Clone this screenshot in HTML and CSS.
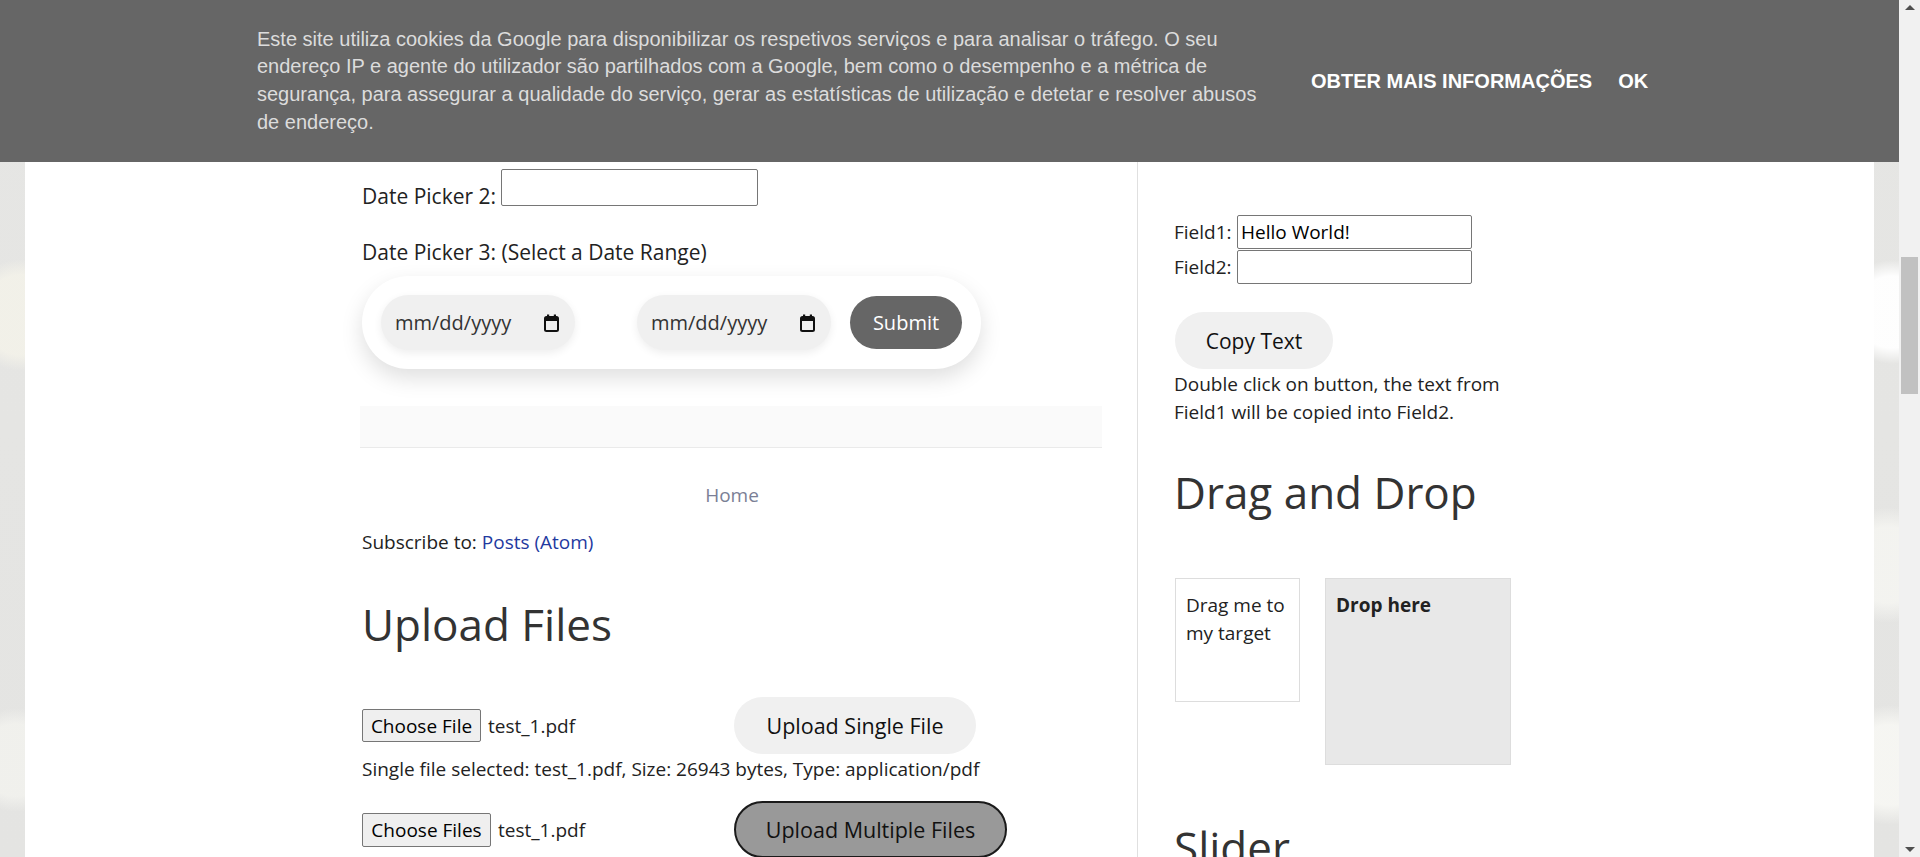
FILE: index.html
```html
<!DOCTYPE html>
<html lang="pt">
<head>
<meta charset="utf-8">
<title>Automation Testing Practice</title>
<link rel="stylesheet" href="styles.css">
</head>
<body>
<div class="screen">
  <div class="viewport">
    <div class="page">
      <main class="main">
        <div class="dp2">
          <label class="dp2-label">Date Picker 2:</label>
          <input class="text-input" type="text">
        </div>
        <p class="dp3-label">Date Picker 3: (Select a Date Range)</p>
        <div class="range-pill">
          <div class="date-field">
            <span class="date-text">mm/dd/yyyy</span>
            <svg class="cal" width="15" height="18" viewBox="0 0 15 18"><rect x="1" y="3" width="13" height="14" rx="1.5" fill="none" stroke="#111" stroke-width="2"/><rect x="1" y="3" width="13" height="4" fill="#111"/><rect x="3" y="0.5" width="2.2" height="3" fill="#111"/><rect x="9.8" y="0.5" width="2.2" height="3" fill="#111"/></svg>
          </div>
          <div class="date-field gap">
            <span class="date-text">mm/dd/yyyy</span>
            <svg class="cal" width="15" height="18" viewBox="0 0 15 18"><rect x="1" y="3" width="13" height="14" rx="1.5" fill="none" stroke="#111" stroke-width="2"/><rect x="1" y="3" width="13" height="4" fill="#111"/><rect x="3" y="0.5" width="2.2" height="3" fill="#111"/><rect x="9.8" y="0.5" width="2.2" height="3" fill="#111"/></svg>
          </div>
          <button class="submit" type="button">Submit</button>
        </div>
        <div class="gray-band"></div>
        <div class="home"><a class="home-link" href="#">Home</a></div>
        <p class="subscribe">Subscribe to: <a class="feed-link" href="#">Posts (Atom)</a></p>
        <h2 class="section-title">Upload Files</h2>
        <div class="upload-row">
          <div class="file-pick">
            <button class="file-btn single" type="button">Choose File</button>
            <span class="file-name">test_1.pdf</span>
          </div>
          <button class="pill-btn w-single" type="button">Upload Single File</button>
        </div>
        <p class="file-info">Single file selected: test_1.pdf, Size: 26943 bytes, Type: application/pdf</p>
        <div class="upload-row second">
          <div class="file-pick">
            <button class="file-btn multi" type="button">Choose Files</button>
            <span class="file-name">test_1.pdf</span>
          </div>
          <button class="pill-btn w-multi dark" type="button">Upload Multiple Files</button>
        </div>
      </main>
      <aside class="sidebar">
        <div class="field-row">
          <label class="field-label">Field1:</label>
          <input class="field-input" type="text" value="Hello World!">
        </div>
        <div class="field-row">
          <label class="field-label">Field2:</label>
          <input class="field-input" type="text">
        </div>
        <button class="pill-btn w-copy copy" type="button">Copy Text</button>
        <p class="note">Double click on button, the text from Field1 will be copied into Field2.</p>
        <h2 class="section-title widget-title">Drag and Drop</h2>
        <div class="dnd">
          <div class="drag-box">Drag me to<br>my target</div>
          <div class="drop-box">Drop here</div>
        </div>
        <h2 class="section-title slider-title">Slider</h2>
      </aside>
    </div>
    <div class="cookie-bar">
      <p class="cookie-text">Este site utiliza cookies da Google para disponibilizar os respetivos serviços e para analisar o tráfego. O seu endereço IP e agente do utilizador são partilhados com a Google, bem como o desempenho e a métrica de segurança, para assegurar a qualidade do serviço, gerar as estatísticas de utilização e detetar e resolver abusos de endereço.</p>
      <div class="cookie-actions">
        <a href="#" class="cookie-btn">Obter mais informações</a>
        <a href="#" class="cookie-btn">OK</a>
      </div>
    </div>
  </div>
  <div class="scrollbar">
    <div class="sb-up"></div>
    <div class="sb-thumb"></div>
    <div class="sb-down"></div>
  </div>
</div>
</body>
</html>
```

FILE: styles.css
```css
* { box-sizing: border-box; }
html, body { margin: 0; padding: 0; }
body {
  width: 1920px;
  height: 857px;
  overflow: hidden;
  font-family: "Open Sans", "Noto Sans", sans-serif;
  font-size: 19px;
  line-height: 28px;
  color: #222;
}
p { margin: 0; }
button, input { font-family: inherit; }

.screen { display: flex; height: 857px; }

.viewport {
  position: relative;
  flex: 1;
  overflow: hidden;
  background:
    radial-gradient(circle at 1892px 312px, rgba(255,255,255,0.95) 0 36px, rgba(255,255,255,0) 52px),
    radial-gradient(circle at 1888px 565px, rgba(248,248,244,0.75) 0 38px, rgba(255,255,255,0) 58px),
    radial-gradient(circle at 1890px 765px, rgba(250,250,246,0.8) 0 40px, rgba(255,255,255,0) 60px),
    radial-gradient(circle at 22px 315px, rgba(250,248,236,0.6) 0 40px, rgba(255,255,255,0) 56px),
    radial-gradient(circle at 16px 760px, rgba(250,250,245,0.55) 0 36px, rgba(255,255,255,0) 52px),
    linear-gradient(#e6e6e4, #e4e4e2);
}

.page {
  margin: 0 25px;
  height: 100%;
  background: #fff;
  display: flex;
  align-items: flex-start;
}

/* ---------- main column ---------- */
.main {
  margin-left: 335px;
  width: 742px;
  flex: none;
  padding: 169px 0 0 2px;
}

.dp2 { display: flex; align-items: flex-start; height: 41px; }
.dp2-label { width: 139px; align-self: flex-end; font-size: 21px; white-space: nowrap; }
.text-input {
  width: 257px;
  height: 37px;
  border: 1px solid #767676;
  border-radius: 2px;
  background: #fff;
  padding: 0 4px;
  font-size: 20px;
}

.dp3-label { margin-top: 28px; font-size: 21px; }

.range-pill {
  margin-top: 10px;
  width: 619px;
  height: 93px;
  padding: 0 19px;
  border-radius: 47px;
  background: #fff;
  box-shadow: 0 9px 22px rgba(0,0,0,0.13);
  display: flex;
  align-items: center;
}
.date-field {
  width: 194px;
  height: 55px;
  border-radius: 28px;
  background: #f0f0f0;
  box-shadow: 0 3px 8px rgba(0,0,0,0.07);
  display: flex;
  align-items: center;
  justify-content: space-between;
  padding: 0 16px 0 14px;
  color: #333;
  font-size: 20px;
}
.date-field.gap { margin-left: 62px; }
.cal { display: block; flex: none; }
.submit {
  margin-left: 19px;
  width: 112px;
  height: 53px;
  border: none;
  border-radius: 27px;
  background: #666;
  color: #fff;
  font-size: 20px;
  padding: 0;
}

.gray-band {
  margin: 37px 0 0 -2px;
  width: 742px;
  height: 42px;
  background: #fafafa;
  border-bottom: 1px solid #eaeaea;
}
.home { margin-top: 33px; text-align: center; }
.home-link { color: #7b7f96; text-decoration: none; }
.subscribe { margin-top: 19px; }
.feed-link { color: #1f3aa0; text-decoration: none; }

.section-title {
  margin: 43px 0 0;
  font-size: 44px;
  font-weight: 400;
  line-height: 50px;
  color: #333;
}

.upload-row { margin-top: 48px; display: flex; align-items: center; height: 57px; }
.upload-row.second { margin-top: 18px; }
.file-pick { width: 372px; flex: none; display: flex; align-items: center; gap: 7px; }
.file-btn {
  height: 33px;
  padding: 0;
  border: 1px solid #767676;
  border-radius: 2px;
  background: #efefef;
  color: #000;
  font-size: 19px;
}
.file-btn.single { width: 119px; }
.file-btn.multi { width: 129px; height: 34px; }
.file-name { color: #222; }

.pill-btn {
  height: 57px;
  padding: 0;
  border: none;
  border-radius: 29px;
  background: #f0f0f0;
  color: #111;
  font-size: 21.5px;
}
.w-single { width: 242px; }
.w-multi { width: 273px; }
.w-copy { width: 158px; font-size: 21px; }
.pill-btn.dark { background: #999; border: 2px solid #1a1a1a; }

.file-info { margin-top: 1px; }

/* ---------- sidebar ---------- */
.sidebar {
  margin-left: 35px;
  align-self: stretch;
  width: 387px;
  flex: none;
  border-left: 1px solid #e0e0e0;
  padding: 215px 0 0 36px;
}
.field-row { display: flex; align-items: center; height: 34px; }
.field-row + .field-row { margin-top: 1px; }
.field-label { width: 63px; flex: none; }
.field-input {
  width: 235px;
  height: 34px;
  border: 1px solid #767676;
  border-radius: 2px;
  padding: 0 3px;
  font-size: 19px;
  color: #000;
}
.copy { display: block; margin-top: 28px; margin-left: 1px; }
.note { margin-top: 1px; width: 350px; }

.widget-title { margin-top: 41px; }
.dnd { margin-top: 61px; margin-left: 1px; display: flex; align-items: flex-start; gap: 25px; }
.drag-box {
  width: 125px;
  height: 124px;
  border: 1px solid #ddd;
  padding: 12px 10px;
  white-space: nowrap;
}
.drop-box {
  width: 186px;
  height: 187px;
  border: 1px solid #ddd;
  background: #e8e8e8;
  padding: 12px 10px;
  font-weight: 700;
}
.slider-title { margin-top: 57px; }

/* ---------- cookie bar ---------- */
.cookie-bar {
  position: absolute;
  top: 0;
  left: 0;
  right: 0;
  height: 162px;
  background: #666;
  display: flex;
  align-items: center;
  padding-left: 257px;
  font-family: "Liberation Sans", Arial, sans-serif;
}
.cookie-text {
  width: 1000px;
  flex: none;
  font-size: 20px;
  line-height: 27.75px;
  color: #dcdcdc;
}
.cookie-actions { margin-left: 54px; display: flex; gap: 26px; }
.cookie-btn {
  color: #fff;
  font-size: 20px;
  font-weight: 700;
  text-decoration: none;
  text-transform: uppercase;
}

/* ---------- scrollbar ---------- */
.scrollbar {
  width: 21px;
  flex: none;
  background: #f1f1f1;
  display: flex;
  flex-direction: column;
  align-items: center;
}
.sb-up {
  margin-top: 5px;
  width: 0; height: 0;
  border-left: 5px solid transparent;
  border-right: 5px solid transparent;
  border-bottom: 5px solid #505050;
}
.sb-thumb { margin-top: 247px; width: 17px; height: 137px; background: #c1c1c1; }
.sb-down {
  margin-top: auto;
  margin-bottom: 5px;
  width: 0; height: 0;
  border-left: 5px solid transparent;
  border-right: 5px solid transparent;
  border-top: 5px solid #505050;
}
```
